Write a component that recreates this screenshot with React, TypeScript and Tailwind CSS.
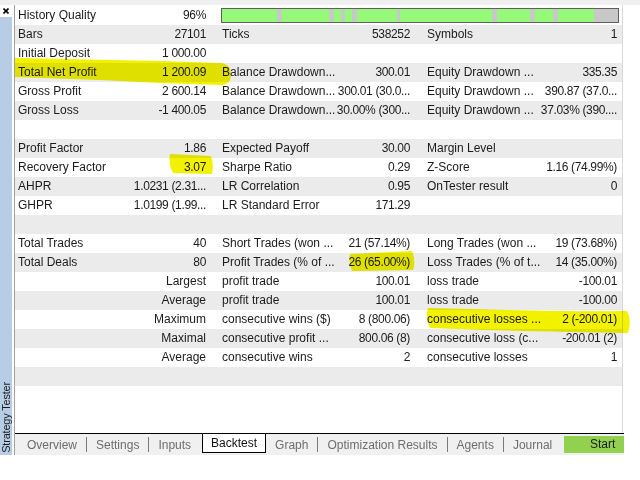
import React from "react";

// report rows: label / value for each of the three column groups
const rows: string[][] = [
  ["History Quality", "96%"],
  ["Bars", "27101", "Ticks", "538252", "Symbols", "1"],
  ["Initial Deposit", "1 000.00", "", "", "", ""],
  ["Total Net Profit", "1 200.09", "Balance Drawdown...", "300.01", "Equity Drawdown ...", "335.35"],
  ["Gross Profit", "2 600.14", "Balance Drawdown...", "300.01 (30.0...", "Equity Drawdown ...", "390.87 (37.0..."],
  ["Gross Loss", "-1 400.05", "Balance Drawdown...", "30.00% (300...", "Equity Drawdown ...", "37.03% (390...."],
  [],
  ["Profit Factor", "1.86", "Expected Payoff", "30.00", "Margin Level", ""],
  ["Recovery Factor", "3.07", "Sharpe Ratio", "0.29", "Z-Score", "1.16 (74.99%)"],
  ["AHPR", "1.0231 (2.31...", "LR Correlation", "0.95", "OnTester result", "0"],
  ["GHPR", "1.0199 (1.99...", "LR Standard Error", "171.29", "", ""],
  [],
  ["Total Trades", "40", "Short Trades (won ...", "21 (57.14%)", "Long Trades (won ...", "19 (73.68%)"],
  ["Total Deals", "80", "Profit Trades (% of ...", "26 (65.00%)", "Loss Trades (% of t...", "14 (35.00%)"],
  ["", "Largest", "profit trade", "100.01", "loss trade", "-100.01"],
  ["", "Average", "profit trade", "100.01", "loss trade", "-100.00"],
  ["", "Maximum", "consecutive wins ($)", "8 (800.06)", "consecutive losses ...", "2 (-200.01)"],
  ["", "Maximal", "consecutive profit ...", "800.06 (8)", "consecutive loss (c...", "-200.01 (2)"],
  ["", "Average", "consecutive wins", "2", "consecutive losses", "1"],
  [],
];

const groupBox = [
  "w-[205px] pl-[3px] pr-[14px]",
  "w-[205px] pl-[2px] pr-[15px]",
  "w-[197px] pl-[2px] pr-[5px]",
];

function Group({ i, label, value }: { i: number; label?: string; value?: string }) {
  // numbers are set a bit tighter, as the original font has narrower digits
  const numeric = value !== undefined && /\d/.test(value);
  return (
    <div className={`${groupBox[i]} flex shrink-0`}>
      <div className="flex-1 min-w-0 whitespace-nowrap">{label}</div>
      <div
        className={`w-[72px] shrink-0 flex justify-end whitespace-pre ${numeric ? "tracking-[-0.35px]" : ""}`}
      >
        {value}
      </div>
    </div>
  );
}

// gray gaps in the history quality bar (x offsets inside the bar)
const gaps: [number, number][] = [
  [56, 5], [108, 5], [120, 4], [131, 5], [176, 3], [271, 5], [309, 5], [332, 5], [373, 24],
];

function QualityBar() {
  return (
    <svg width="398" height="15" viewBox="0 0 398 15" className="block">
      <rect x="1" y="1" width="396" height="13" fill="#97f97a" />
      {gaps.map(([x, w]) => (
        <rect key={x} x={x} y="1" width={w} height="13" fill="#c8c8c8" />
      ))}
      <rect x="0.5" y="0.5" width="397" height="14" fill="none" stroke="#5f5f5f" />
    </svg>
  );
}

const tabs = ["Overview", "Settings", "Inputs", "Backtest", "Graph", "Optimization Results", "Agents", "Journal"];

function Sep() {
  return <span className="w-px h-[15px] bg-[#7a7a7a] mx-[9px]" />;
}

export default function App() {
  return (
    <div className="w-[640px] h-[480px] bg-white relative overflow-hidden flex flex-col font-['Liberation_Sans',Arial,sans-serif] text-[12px] text-[#1b1b1b]">
      <div className="h-[5px] bg-[#f0f0f0] shrink-0" />
      <div className="flex flex-1 min-h-0">
        <aside className="w-[14px] flex flex-col shrink-0">
          <div className="h-[12px] pl-[3px] pt-[3px]">
            <svg width="6" height="6" viewBox="0 0 6 6" className="block">
              <path d="M0.5 0.5 L5.5 5.5 M5.5 0.5 L0.5 5.5" stroke="#000" strokeWidth="1.6" />
            </svg>
          </div>
          <div className="flex-1 w-[12px] bg-[#b7cde6] flex items-end justify-center pb-[2px]">
            <span className="[writing-mode:vertical-rl] rotate-180 text-[11px] leading-[12px] text-[#1b1b1b] whitespace-nowrap tracking-[-0.2px]">
              Strategy Tester
            </span>
          </div>
          <div className="h-[25px]" />
        </aside>
        <div className="w-px bg-[#a0a0a0] mb-[25px] shrink-0" />

        <main className="flex-1 flex flex-col min-w-0">
          <div className="flex-1 w-[608px] border-r border-[#d9d9d9] pt-[1px]">
            {rows.map((r, idx) => (
              <div
                key={idx}
                className={`flex h-[19px] leading-[19px] w-[607px] ${idx % 2 ? "bg-[#ebebeb]" : "bg-white"}`}
              >
                {idx === 0 ? (
                  <>
                    <Group i={0} label={r[0]} value={r[1]} />
                    <div className="pl-[1px] flex items-center">
                      <QualityBar />
                    </div>
                  </>
                ) : r.length ? (
                  <>
                    <Group i={0} label={r[0]} value={r[1]} />
                    <Group i={1} label={r[2]} value={r[3]} />
                    <Group i={2} label={r[4]} value={r[5]} />
                  </>
                ) : null}
              </div>
            ))}
          </div>

          <div className="h-[22px] w-[609px] border-t border-black bg-[#f0f0f0] flex items-center pl-[12px] text-[#6d6d6d] shrink-0">
            {tabs.map((t, i) => {
              if (t === "Backtest") {
                return (
                  <span
                    key={t}
                    className="self-start h-[19px] leading-[18px] ml-[11px] mr-[9px] px-[8px] bg-white border-x border-b border-black text-[#111]"
                  >
                    {t}
                  </span>
                );
              }
              const needSep = i > 0 && tabs[i - 1] !== "Backtest" && tabs[i - 1] !== "Inputs";
              return (
                <React.Fragment key={t}>
                  {needSep && <Sep />}
                  <span className="whitespace-nowrap">{t}</span>
                </React.Fragment>
              );
            })}
            <div className="ml-auto w-[60px] h-[17px] leading-[17px] bg-[#92d050] pl-[26px] text-[#1b1b1b]">Start</div>
          </div>
          <div className="h-[25px] shrink-0" />
        </main>
      </div>

      {/* highlighter marks */}
      <svg
        className="absolute inset-0 pointer-events-none mix-blend-multiply"
        width="640"
        height="480"
        viewBox="0 0 640 480"
      >
        <g fill="#f2f200">
          <path d="M15,58 L160,61 L222,63 Q231,65 231,74 Q231,85 222,85 L160,83 L100,80 L15,77 Z" />
          <path d="M170,154 L211,156 Q214,165 212,174 L173,173 Q168,164 170,154 Z" />
          <path d="M350,254 L412,251 Q416,261 413,270 L352,271 Q348,262 350,254 Z" />
          <path d="M428,308 C500,310 580,312 627,311 Q632,320 628,333 C560,332 480,330 430,328 Q425,318 428,308 Z" />
        </g>
      </svg>
    </div>
  );
}
